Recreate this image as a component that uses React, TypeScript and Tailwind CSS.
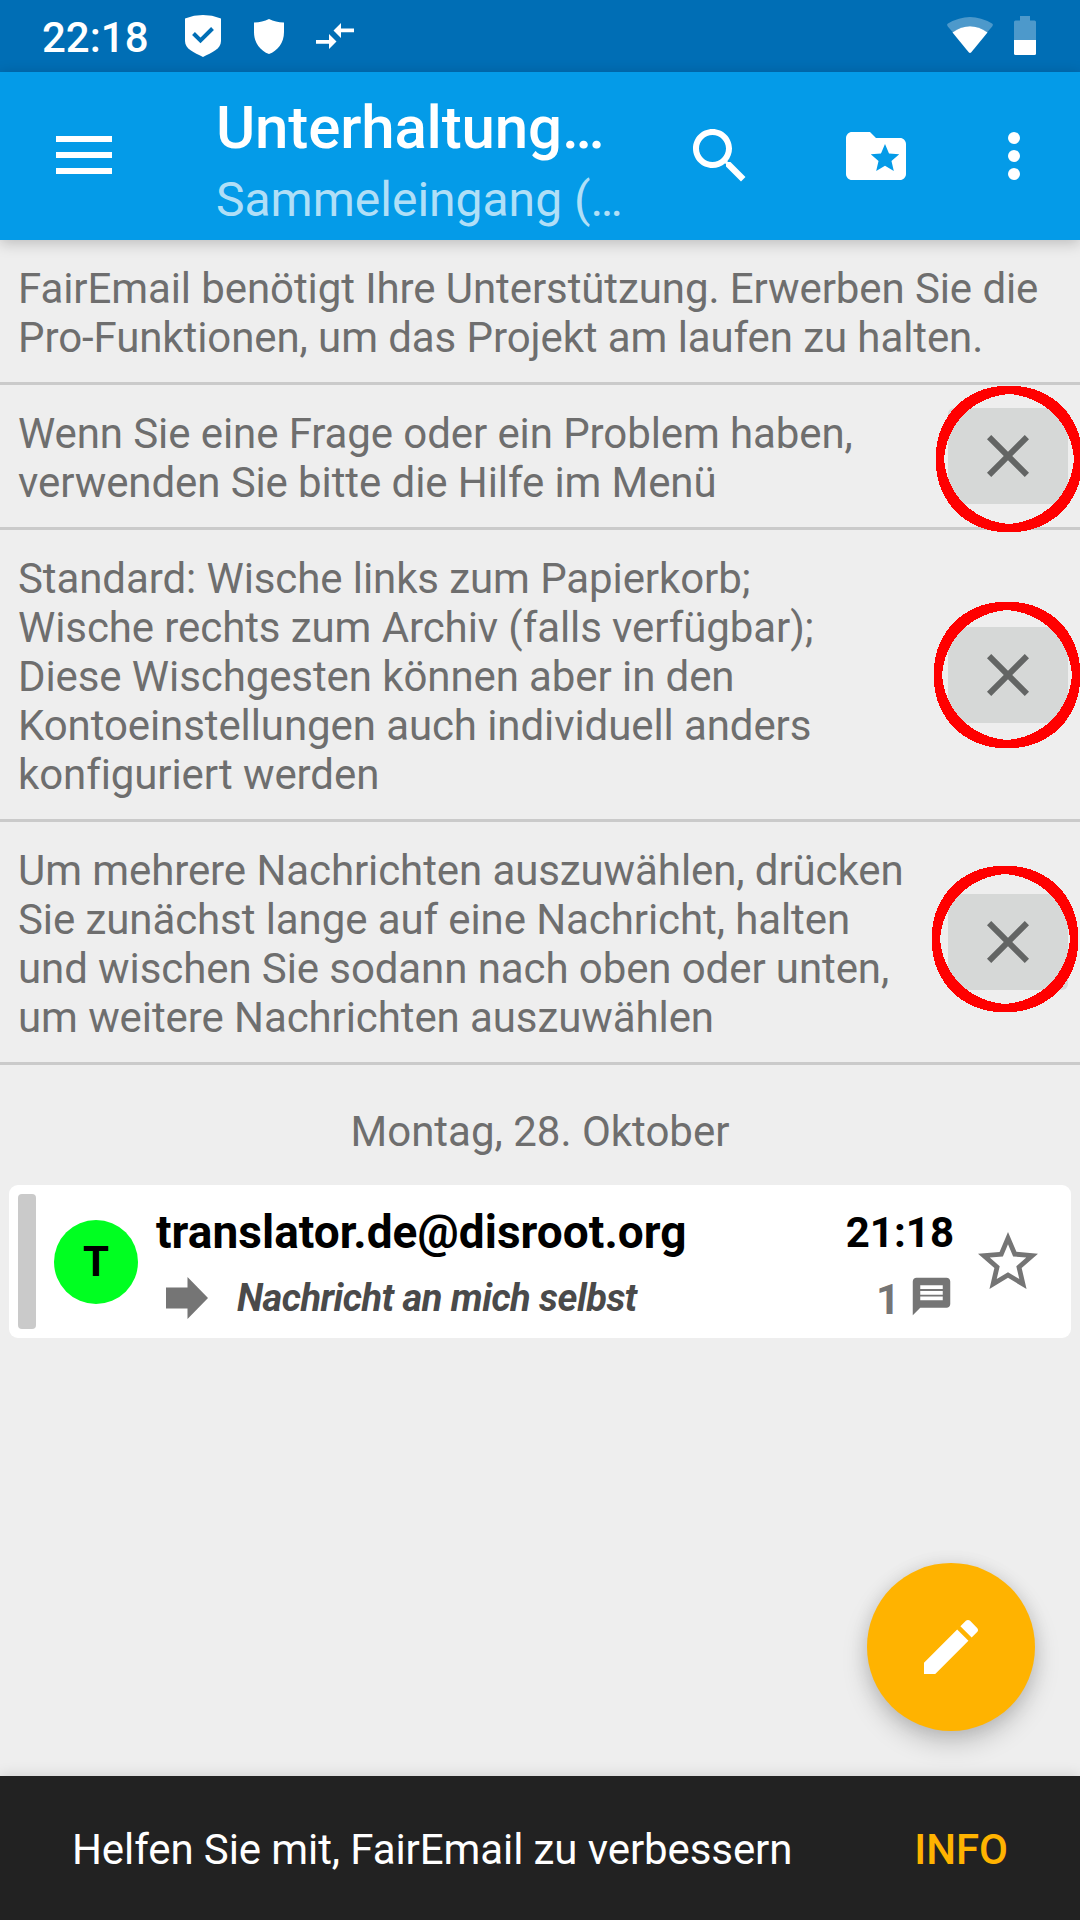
import type { ReactNode } from "react";

type Hint = { text: string; ring?: string };

const hints: Hint[] = [
  { text: "FairEmail benötigt Ihre Unterstützung. Erwerben Sie die\nPro-Funktionen, um das Projekt am laufen zu halten." },
  {
    text: "Wenn Sie eine Frage oder ein Problem haben,\nverwenden Sie bitte die Hilfe im Menü",
    ring: "-left-3 -top-[22px]",
  },
  {
    text: "Standard: Wische links zum Papierkorb;\nWische rechts zum Archiv (falls verfügbar);\nDiese Wischgesten können aber in den\nKontoeinstellungen auch individuell anders\nkonfiguriert werden",
    ring: "-left-3.5 -top-[25px]",
  },
  {
    text: "Um mehrere Nachrichten auszuwählen, drücken\nSie zunächst lange auf eine Nachricht, halten\nund wischen Sie sodann nach oben oder unten,\num weitere Nachrichten auszuwählen",
    ring: "-left-4 -top-7",
  },
];

function Icon({ d, className, children }: { d?: string; className: string; children?: ReactNode }) {
  return (
    <svg viewBox="0 0 24 24" fill="currentColor" className={className}>
      {d && <path d={d} />}
      {children}
    </svg>
  );
}

function StatusBar() {
  return (
    <div className="flex h-[72px] shrink-0 items-start bg-[#006eb5] pl-[42px] pr-11 text-white">
      <span className="mt-[13px] w-[143px] text-[42px] leading-[49px] font-medium">22:18</span>
      <svg viewBox="0 0 36 42" className="mt-[15px] h-[42px] w-9">
        <path d="M0 3.5Q18-3.4 36 3.5V26C36 34 27 37.5 18 42 9 37.5 0 34 0 26Z" fill="white" />
        <path d="M8.5 18.5l7 7L27.5 13.5" fill="none" stroke="#006eb5" strokeWidth="4" />
      </svg>
      <svg viewBox="0 0 30 35" className="ml-[33px] mt-[19px] h-[35px] w-[30px]">
        <path d="M15 0Q22 3.5 30 3.4V13C30 24 23.5 32 15 35 6.5 32 0 24 0 13V3.4Q8 3.5 15 0Z" fill="white" />
      </svg>
      <svg viewBox="0 0 38 26" className="ml-8 mt-[23px] h-[26px] w-[38px]" fill="white">
        <path d="M38 5.5H25V0l-7.5 7.5L25 15V9.2h13zM0 17h13v-6l7.5 7.5L13 26v-5.3H0z" />
      </svg>
      <svg viewBox="0 0 46 36" className="ml-auto mt-[17px] h-9 w-[46px]">
        <path d="M.8 9.5Q-.6 7.5 1 6.5 23-6.5 45 6.5 46.6 7.5 45.2 9.5L40 15.5Q23 3 6 15.5Z" fill="white" opacity=".3" />
        <path d="M5.5 15.5Q23 3 40.500 15.5L24.300 35.300Q23 36.500 21.700 35.300Z" fill="white" />
      </svg>
      <svg viewBox="0 0 22 39" className="ml-[21px] mt-4 h-[39px] w-[22px]">
        <path d="M6 0h10v4.500h4.500Q22 4.500 22 6V24H0V6Q0 4.500 1.500 4.500H6Z" fill="white" opacity=".3" />
        <path d="M0 24h22v13.500Q22 39 20.500 39h-19Q0 39 0 37.500Z" fill="white" />
      </svg>
    </div>
  );
}

function Toolbar() {
  return (
    <header className="relative z-10 flex h-[168px] shrink-0 items-center bg-[#049be8] pl-14 pr-[30px] text-white shadow-[0_3px_14px_rgba(0,0,0,0.22)]">
      <button className="-mt-0.5 flex w-14 flex-col gap-2.5">
        <span className="h-1.5 bg-white" />
        <span className="h-1.5 bg-white" />
        <span className="h-1.5 bg-white" />
      </button>
      <div className="ml-[104px] w-[468px] pt-3 whitespace-nowrap">
        <h1 className="text-[60px] leading-[70px] font-medium tracking-[-0.15px]">Unterhaltung…</h1>
        <p className="mt-[5px] text-[48px] leading-[64px] text-white/70">Sammeleingang (…</p>
      </div>
      <Icon
        className="size-[72px]"
        d="M15.500 14h-.79l-.28-.27C15.410 12.590 16 11.110 16 9.500 16 5.910 13.090 3 9.500 3S3 5.910 3 9.500 5.910 16 9.500 16c1.610 0 3.090-.59 4.230-1.570l.27.28v.79l5 4.990L20.490 19l-4.990-5zm-6 0C7.010 14 5 11.990 5 9.500S7.010 5 9.500 5 14 7.010 14 9.500 11.990 14 9.500 14z"
      />
      <Icon
        className="ml-[84px] size-[72px]"
        d="M20 6h-8l-2-2H4c-1.100 0-1.990.9-1.990 2L2 18c0 1.100.9 2 2 2h16c1.100 0 2-.9 2-2V8c0-1.100-.9-2-2-2zm-2.060 11L15 15.280 12.060 17l.78-3.330-2.590-2.240 3.410-.29L15 8l1.340 3.140 3.410.29-2.590 2.240.78 3.330z"
      />
      <Icon className="ml-[66px] size-[72px]">
        <circle cx="12" cy="6" r="2" />
        <circle cx="12" cy="12" r="2" />
        <circle cx="12" cy="18" r="2" />
      </Icon>
    </header>
  );
}

function MarkerRing({ className }: { className: string }) {
  return (
    <svg
      viewBox="0 0 146 146"
      shapeRendering="crispEdges"
      className={`pointer-events-none absolute size-[146px] max-w-none ${className}`}
    >
      <path
        fill="#ff0000"
        fillRule="evenodd"
        d="M69 0h8a69 69 0 0 1 69 69v8a69 69 0 0 1-69 69h-8a69 69 0 0 1-69-69v-8a69 69 0 0 1 69-69ZM137.900 73A69 69 0 0 0 73 8.100 69 69 0 0 0 8.100 73 69 69 0 0 0 73 137.900 69 69 0 0 0 137.900 73Z"
      />
    </svg>
  );
}

function HintRow({ hint }: { hint: Hint }) {
  return (
    <section className="flex items-center justify-between border-b-[3px] border-[#cacaca] pr-3 pl-[18px]">
      <p className="pt-6 pb-5 text-[42px] leading-[49px] tracking-[-0.09px] whitespace-pre text-[#6e6e6e]">
        {hint.text}
      </p>
      {hint.ring && (
        <button className="relative flex h-24 w-[120px] shrink-0 items-center justify-center rounded-md bg-[#d6d8d7] text-[#636564]">
          <Icon
            className="size-[72px]"
            d="M19 6.410L17.590 5 12 10.590 6.410 5 5 6.410 10.590 12 5 17.590 6.410 19 12 13.410 17.590 19 19 17.590 13.410 12z"
          />
          <MarkerRing className={hint.ring} />
        </button>
      )}
    </section>
  );
}

function MessageCard() {
  return (
    <article className="mx-[9px] flex h-[153px] rounded-[9px] bg-white p-[9px]">
      <div className="w-[18px] rounded-[4px] bg-[#cacaca]" />
      <div className="mt-[26px] ml-[18px] flex size-[84px] items-center justify-center rounded-full bg-[#00ff21] text-[42px] font-bold text-black">
        <span className="-mt-0.5">T</span>
      </div>
      <div className="ml-[18px] flex w-[798px] flex-col">
        <div className="flex h-[63px] items-start justify-between font-bold text-black">
          <span className="mt-3 text-[46px] leading-[53px] tracking-[0.05px]">translator.de@disroot.org</span>
          <span className="mt-[14px] text-[42px] leading-[49px]">21:18</span>
        </div>
        <div className="flex items-start text-[#757575]">
          <svg viewBox="0 0 42 42" className="mt-5 ml-2.5 size-[42px]" fill="currentColor">
            <path d="M0 10.500h21.500V0L42 21 21.500 42V31.500H0z" />
          </svg>
          <span className="mt-[19px] ml-[29px] text-[38px] leading-[45px] font-bold tracking-[-0.5px] text-[#4a4a4a] italic">
            Nachricht an mich selbst
          </span>
          <span className="mt-[18px] ml-auto text-[42px] leading-[49px] font-bold">1</span>
          <Icon
            className="mt-[17px] ml-[9px] size-[45px]"
            d="M20 2H4c-1.100 0-1.990.9-1.990 2L2 22l4-4h14c1.100 0 2-.9 2-2V4c0-1.100-.9-2-2-2zm-2 12H6v-2h12v2zm0-3H6V9h12v2zm0-3H6V6h12v2z"
          />
        </div>
      </div>
      <Icon
        className="mt-8 ml-[18px] size-[72px] text-[#757575]"
        d="M22 9.240l-7.190-.62L12 2 9.190 8.630 2 9.240l5.460 4.730L5.820 21 12 17.270 18.180 21l-1.630-7.030L22 9.240zM12 15.400l-3.760 2.270 1-4.280-3.320-2.880 4.380-.38L12 6.100l1.710 4.040 4.380.38-3.320 2.880 1 4.280L12 15.400z"
      />
    </article>
  );
}

export default function App() {
  return (
    <div className="flex h-[1920px] w-[1080px] flex-col overflow-hidden bg-[#eeeeee] font-['Roboto',sans-serif]">
      <StatusBar />
      <Toolbar />
      <main className="relative flex-1">
        {hints.map((hint) => (
          <HintRow key={hint.text} hint={hint} />
        ))}
        <h2 className="flex h-[120px] items-start justify-center pt-[42px] text-[42px] leading-[49px] text-[#6e6e6e]">
          Montag, 28. Oktober
        </h2>
        <MessageCard />
        <button className="absolute right-[45px] bottom-[45px] flex size-[168px] items-center justify-center rounded-full bg-[#ffb300] text-white shadow-[0_12px_26px_rgba(0,0,0,0.18),0_2px_18px_rgba(0,0,0,0.1)]">
          <Icon
            className="size-[72px]"
            d="M3 17.250V21h3.750L17.810 9.940l-3.750-3.750L3 17.250zM20.710 7.040c.39-.39.39-1.020 0-1.410l-2.340-2.340c-.39-.39-1.020-.39-1.410 0l-1.830 1.830 3.750 3.750 1.830-1.830z"
          />
        </button>
      </main>
      <footer className="relative flex h-36 shrink-0 items-center justify-between bg-[#222222] px-[72px] pt-0.5 text-[42px] leading-[49px] shadow-[0_0_14px_rgba(0,0,0,0.14)]">
        <span className="tracking-[-0.09px] text-white">Helfen Sie mit, FairEmail zu verbessern</span>
        <button className="font-medium text-[#ffb300]">INFO</button>
      </footer>
    </div>
  );
}
